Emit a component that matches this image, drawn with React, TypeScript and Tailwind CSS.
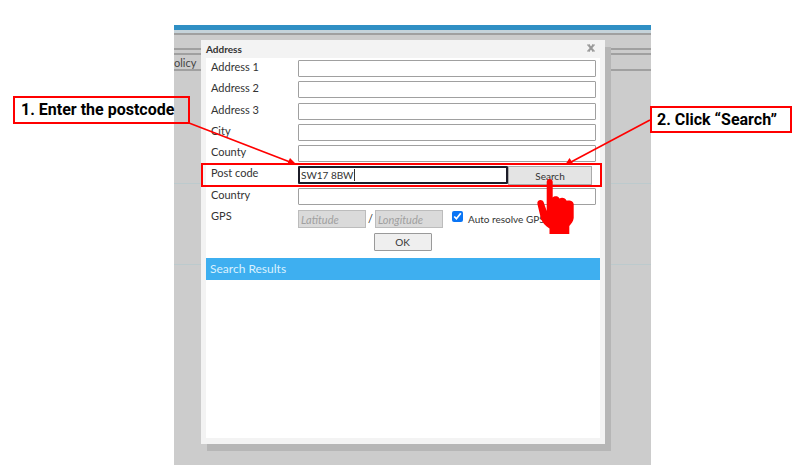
import type { ReactNode } from "react";

const fieldBase =
  "block h-[17px] rounded-[1px] border border-[#a0a0a0] bg-white px-0.5 text-[11px] leading-none text-[#333] outline-none";

function Row({ label, id, children }: { label: string; id: string; children?: ReactNode }) {
  return (
    <div className="flex items-start">
      <label htmlFor={id} className="w-[87px] shrink-0 leading-[14px]">
        {label}
      </label>
      {children ?? <input id={id} type="text" className={`${fieldBase} min-w-0 flex-1`} />}
    </div>
  );
}

function AddressDialog() {
  return (
    <section
      role="dialog"
      aria-label="Address"
      className="bg-[#f3f3f3] px-[5px] pb-[6px] text-[11px] text-[#333] shadow-[6px_7px_0_0_#b6b6b6]"
    >
      <header className="flex h-[18px] items-center justify-between pr-1">
        <h1 className="text-[10px] font-bold text-[#333]">Address</h1>
        <button type="button" aria-label="Close" className="mb-0.5 p-px text-[#999]">
          <svg width="8" height="8" viewBox="0 0 8 8" stroke="currentColor" strokeWidth="2">
            <path d="M0 1h3M5 1h3M0 7h3M5 7h3" strokeWidth="1" />
            <path d="M1.500 1l5 6M6.500 1l-5 6" />
          </svg>
        </button>
      </header>
      <div className="bg-white">
        <form className="pr-1 pl-[5px] pt-0.5" onSubmit={(e) => e.preventDefault()}>
          <div className="grid h-[149px] grid-rows-7">
            <Row label="Address 1" id="address1" />
            <Row label="Address 2" id="address2" />
            <Row label="Address 3" id="address3" />
            <Row label="City" id="city" />
            <Row label="County" id="county" />
            <Row label="Post code" id="postcode">
              <div className="relative flex flex-1 pr-1">
                <input
                  id="postcode"
                  type="text"
                  defaultValue="SW17 8BW"
                  className="block h-[18px] min-w-0 flex-1 rounded-[1px] border-2 border-[#1c1c28] bg-white px-px text-[10px] leading-none text-[#333] outline-none"
                />
                <span className="absolute top-[3px] left-[56px] h-[12px] w-px bg-[#333]" />
                <button
                  type="button"
                  className="h-[19px] w-[84px] border border-[#aaa] bg-[#e4e4e4] text-[10px] leading-none"
                >
                  Search
                </button>
              </div>
            </Row>
            <Row label="Country" id="country" />
          </div>
          <Row label="GPS" id="latitude">
            <div className="flex items-center pt-px">
              <input
                id="latitude"
                type="text"
                disabled
                placeholder="Latitude"
                className="h-[18px] w-[68px] border border-[#bcbcbc] bg-[#dadada] px-0.5 text-[11px] italic placeholder:text-[#a0a0a0]"
              />
              <span className="w-[9px] text-center">/</span>
              <input
                type="text"
                aria-label="Longitude"
                disabled
                placeholder="Longitude"
                className="h-[18px] w-[68px] border border-[#bcbcbc] bg-[#dadada] px-0.5 text-[11px] italic placeholder:text-[#a0a0a0]"
              />
              <input id="auto" type="checkbox" defaultChecked className="mb-1.5 ml-[9px] h-[11px] w-[11px] accent-[#0a75f5]" />
              <label htmlFor="auto" className="ml-[5px] text-[10px] leading-[14px] whitespace-nowrap">
                Auto resolve GPS
              </label>
            </div>
          </Row>
          <div className="flex justify-center pt-[5px] pr-0.5 pb-[7px]">
            <button
              type="submit"
              className="h-[18px] w-[58px] rounded-[1px] border border-[#9a9a9a] bg-[#efefef] text-[10px] leading-none"
            >
              OK
            </button>
          </div>
        </form>
        <h2 className="bg-[#3eaff0] px-1 text-[12px] leading-[22px] text-[#d9f1ff]">Search Results</h2>
        <div className="h-[158px]" />
      </div>
    </section>
  );
}

function Annotations() {
  return (
    <>
      <div className="absolute top-[163px] left-[201px] h-[24px] w-[401px] border-2 border-[#f00]" />
      <svg
        className="pointer-events-none absolute top-0 left-0"
        width="800"
        height="471"
        viewBox="0 0 800 471"
        fill="#f00"
        stroke="#f00"
      >
        <path d="M189 123L290 162M650 120L571 162" strokeWidth="1.6" fill="none" />
        <path d="M296 164L287 164.5L290 158ZM565 165L569.500 158L573.500 164Z" stroke="none" />
        <path
          d="M549.700 179c1.700 0 3 1.300 3 3V197.500c1.300-1.600 5.600-1.800 6.800.9 2.200-1.300 6-.8 7.200 2.300 3-1 7 .4 7 3.600V218c-.4 3-2 5.500-4.400 8V234H549.500v-5.500c-4-2.500-7-5.500-8.500-9.500l-3.600-15c-.8-4.500 5-5.500 6.300-1.800l3 8.800V182c0-1.700 1.300-3 3-3Z"
          stroke="none"
        />
      </svg>
      <p className="absolute top-[96px] left-[13px] h-[28px] w-[177px] border-2 border-[#f00] px-1.5 font-[Roboto] text-[16px] leading-[24px] font-bold whitespace-nowrap text-black">
        1. Enter the postcode
      </p>
      <p className="absolute top-[106px] left-[650px] h-[27px] w-[142px] border-2 border-[#f00] px-[5px] font-[Roboto] text-[16px] leading-[24px] font-bold whitespace-nowrap text-black">
        2. Click “Search”
      </p>
    </>
  );
}

export default function App() {
  return (
    <main className="relative bg-white pt-[25px] pr-[149px] pb-[6px] pl-[174px] font-[Lato,sans-serif]">
      <div className="relative bg-[#ccc]">
        <div className="absolute inset-x-0 top-0 text-[11px] text-[#444]">
          <div className="h-[5px] bg-[#2f8fc4]" />
          <div className="h-[3px] bg-[#c5d3da]" />
          <div className="h-[2px] bg-[#a0a0a0]" />
          <div className="mt-[13px] h-[7px] border-y-2 border-[#a0a0a0]" />
          <div className="h-[16px] border-b-2 border-[#a0a0a0] leading-[15px]">olicy</div>
          <div className="mt-[112px] h-px bg-[#bccacd]" />
          <div className="mt-[80px] h-px bg-[#bccacd]" />
        </div>
        <div className="relative pt-[15px] pr-[46px] pb-[21px] pl-[27px]">
          <AddressDialog />
        </div>
      </div>
      <Annotations />
    </main>
  );
}
